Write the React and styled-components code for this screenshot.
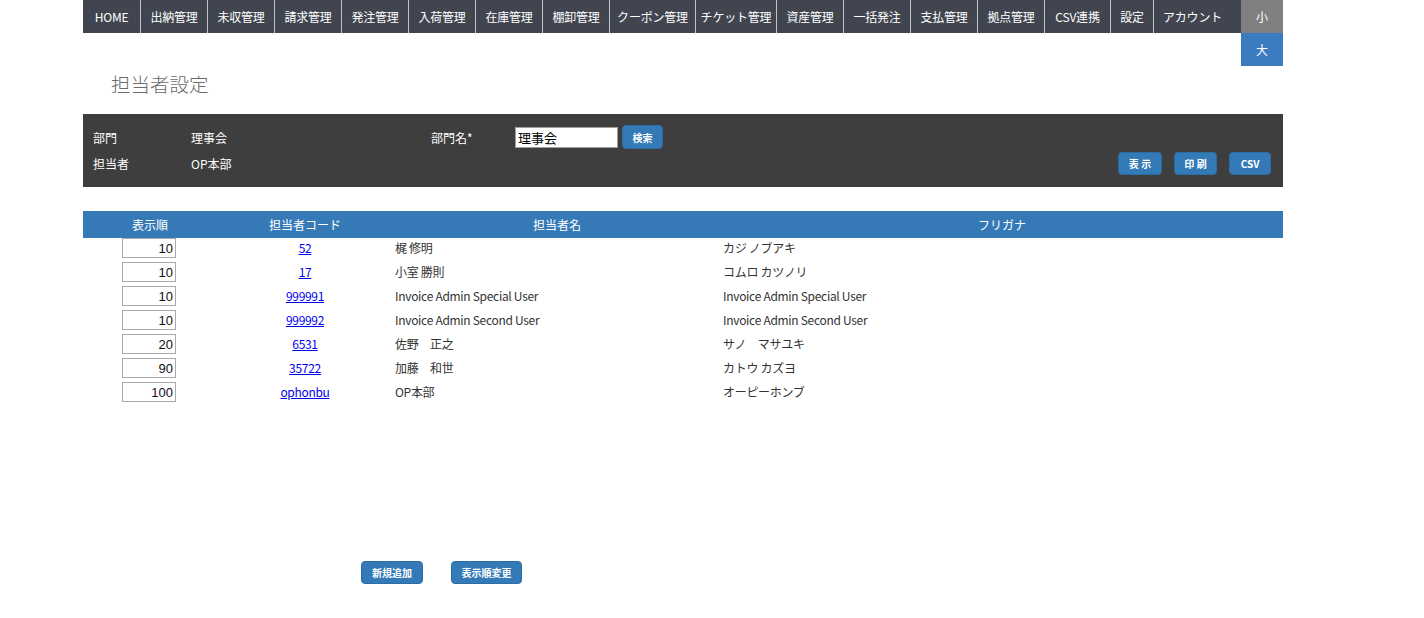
import React from "react";
import styled, { createGlobalStyle } from "styled-components";

const Global = createGlobalStyle`
  html, body { margin: 0; padding: 0; background: #fff; }
  body { font-family: "Noto Sans CJK JP", "Noto Sans", sans-serif; font-size: 12px; color: #333; }
`;

const Page = styled.div`
  width: 1200px;
  margin-left: 83px;
`;

const Header = styled.div`
  display: flex;
  align-items: flex-start;
`;

const Menu = styled.nav`
  flex: 1;
  display: flex;
  height: 33px;
  background: #41454f;
`;

const MenuItem = styled.a`
  flex: ${(p) => (p.$w ? `0 0 ${p.$w}px` : "1")};
  display: flex;
  align-items: center;
  justify-content: ${(p) => (p.$w ? "center" : "flex-start")};
  padding: ${(p) => (p.$w ? "0 0 1px" : "0 0 1px 9px")};
  border-right: ${(p) => (p.$w ? "1px solid #c4c4c4" : "none")};
  color: #fff;
  font-size: 12px;
  letter-spacing: -0.2px;
  white-space: nowrap;
  text-decoration: none;
`;

const SizeSwitch = styled.div`
  display: flex;
  flex-direction: column;
  width: 42px;
`;

const SizeButton = styled.div`
  height: 33px;
  display: flex;
  align-items: center;
  justify-content: center;
  color: #fff;
  font-size: 12px;
  background: ${(p) => (p.$active ? "#3b7bbf" : "#808080")};
`;

const Title = styled.h1`
  box-sizing: border-box;
  height: 48px;
  margin: 0 0 0 28px;
  padding-top: 8px;
  font-size: 19.5px;
  font-weight: 300;
  line-height: 20px;
  color: #6a6a6a;
`;

const Panel = styled.section`
  background: #3e3e3e;
  color: #fff;
  padding: 11px 12px 12px 10px;
  display: grid;
  grid-template-columns: 98px 240px 84px 1fr;
  grid-auto-rows: 24px;
  row-gap: 2px;
  align-items: center;
`;

const PanelLabel = styled.div`
  font-size: 12px;
`;

const PanelCell = styled.div`
  display: flex;
  align-items: center;
  gap: 4px;
`;

const Actions = styled.div`
  grid-column: 3 / 5;
  display: flex;
  justify-content: flex-end;
  gap: 12px;
`;

const TextInput = styled.input`
  width: 103px;
  height: 21px;
  box-sizing: border-box;
  border: 1px solid #a0a0a0;
  padding: 0 2px;
  font-family: "Noto Sans CJK JP", sans-serif;
  font-size: 13px;
  color: #000;
  background: #fff;
  outline: none;
`;

const Button = styled.button`
  width: ${(p) => p.$w}px;
  height: ${(p) => p.$h || 23}px;
  box-sizing: border-box;
  padding: 0;
  background: #337ab7;
  border: 1px solid #2e6da4;
  border-radius: 4px;
  color: #fff;
  font-family: "Noto Sans CJK JP", sans-serif;
  font-size: 10px;
  font-weight: 700;
  cursor: pointer;
`;

const Table = styled.table`
  width: 1200px;
  margin-top: 24px;
  border-collapse: collapse;
  table-layout: fixed;
`;

const Th = styled.th`
  background: #357ab7;
  color: #fff;
  font-weight: 400;
  font-size: 12px;
  height: 27px;
  padding: 0;
  text-align: center;
`;

const Td = styled.td`
  height: 24px;
  padding: 0 0 0 ${(p) => (p.$center ? 0 : 2)}px;
  vertical-align: top;
  line-height: 20px;
  text-align: ${(p) => (p.$center ? "center" : "left")};
  color: #333;
  font-size: 12px;
  letter-spacing: -0.3px;
  white-space: nowrap;
`;

const OrderInput = styled.input`
  display: block;
  margin: 0 auto;
  width: 54px;
  height: 20px;
  box-sizing: border-box;
  border: 1px solid #a9a9a9;
  padding: 0 2px;
  text-align: right;
  font-family: "Liberation Sans", Arial, sans-serif;
  font-size: 13px;
  color: #111;
  position: relative;
  left: -1px;
`;

const CodeLink = styled.a`
  color: #0000ee;
  text-decoration: underline;
  font-size: 12px;
`;

const Footer = styled.div`
  display: flex;
  gap: 28px;
  padding-left: 278px;
  margin-top: 155px;
`;

const menu = [
  ["HOME", 57],
  ["出納管理", 66],
  ["未収管理", 66],
  ["請求管理", 66],
  ["発注管理", 66],
  ["入荷管理", 66],
  ["在庫管理", 66],
  ["棚卸管理", 66],
  ["クーポン管理", 85],
  ["チケット管理", 80],
  ["資産管理", 66],
  ["一括発注", 66],
  ["支払管理", 66],
  ["拠点管理", 66],
  ["CSV連携", 65],
  ["設定", 42],
  ["アカウント", 0],
];

const rows = [
  ["10", "52", "梶 修明", "カジ ノブアキ"],
  ["10", "17", "小室 勝則", "コムロ カツノリ"],
  ["10", "999991", "Invoice Admin Special User", "Invoice Admin Special User"],
  ["10", "999992", "Invoice Admin Second User", "Invoice Admin Second User"],
  ["20", "6531", "佐野　正之", "サノ　マサユキ"],
  ["90", "35722", "加藤　和世", "カトウ カズヨ"],
  ["100", "ophonbu", "OP本部", "オーピーホンブ"],
];

export default function App() {
  return (
    <>
      <Global />
      <Page>
        <Header>
          <Menu>
            {menu.map(([label, w]) => (
              <MenuItem key={label} $w={w} href="#">
                {label}
              </MenuItem>
            ))}
          </Menu>
          <SizeSwitch>
            <SizeButton>小</SizeButton>
            <SizeButton $active>大</SizeButton>
          </SizeSwitch>
        </Header>
        <Title>担当者設定</Title>
        <Panel>
          <PanelLabel>部門</PanelLabel>
          <PanelLabel>理事会</PanelLabel>
          <PanelLabel>部門名*</PanelLabel>
          <PanelCell>
            <TextInput defaultValue="理事会" />
            <Button $w={41} $h={24}>検索</Button>
          </PanelCell>
          <PanelLabel>担当者</PanelLabel>
          <PanelLabel>OP本部</PanelLabel>
          <Actions>
            <Button $w={44}>表 示</Button>
            <Button $w={43}>印 刷</Button>
            <Button $w={42}>CSV</Button>
          </Actions>
        </Panel>
        <Table>
          <colgroup>
            <col style={{ width: 134 }} />
            <col style={{ width: 176 }} />
            <col style={{ width: 328 }} />
            <col style={{ width: 562 }} />
          </colgroup>
          <thead>
            <tr>
              <Th>表示順</Th>
              <Th>担当者コード</Th>
              <Th>担当者名</Th>
              <Th>フリガナ</Th>
            </tr>
          </thead>
          <tbody>
            {rows.map(([order, code, name, kana]) => (
              <tr key={code}>
                <Td $center>
                  <OrderInput defaultValue={order} />
                </Td>
                <Td $center>
                  <CodeLink href="#">{code}</CodeLink>
                </Td>
                <Td>{name}</Td>
                <Td>{kana}</Td>
              </tr>
            ))}
          </tbody>
        </Table>
        <Footer>
          <Button $w={62}>新規追加</Button>
          <Button $w={71}>表示順変更</Button>
        </Footer>
      </Page>
    </>
  );
}
